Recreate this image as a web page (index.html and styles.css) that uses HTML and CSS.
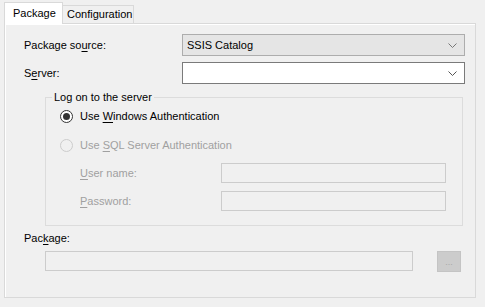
FILE: index.html
```html
<!DOCTYPE html>
<html>
<head>
    <meta charset="utf-8">
    <title>Package</title>
    <link rel="stylesheet" href="styles.css">
</head>
<body>
    <div class="tabs">
        <div class="tab active">Package</div>
        <div class="tab">Configuration</div>
    </div>
    <div class="panel">
        <div class="row">
            <label class="label">Package so<u>u</u>rce:</label>
            <div class="combo readonly">SSIS Catalog<svg class="arrow" width="9" height="5" viewBox="0 0 9 5"><path d="M0.5 0.5 L4.5 4.5 L8.5 0.5" fill="none" stroke="#777" stroke-width="1"/></svg></div>
        </div>
        <div class="row second">
            <label class="label">S<u>e</u>rver:</label>
            <div class="combo edit"><svg class="arrow" width="9" height="5" viewBox="0 0 9 5"><path d="M0.5 0.5 L4.5 4.5 L8.5 0.5" fill="none" stroke="#555" stroke-width="1"/></svg></div>
        </div>

        <fieldset class="group">
            <legend>Log on to the server</legend>
            <div class="radio-row">
                <span class="radio checked"></span>
                <span>Use <u>W</u>indows Authentication</span>
            </div>
            <div class="radio-row disabled sql">
                <span class="radio"></span>
                <span>Use <u>S</u>QL Server Authentication</span>
            </div>
            <div class="cred first">
                <span class="cred-label"><u>U</u>ser name:</span>
                <div class="textbox"></div>
            </div>
            <div class="cred">
                <span class="cred-label"><u>P</u>assword:</span>
                <div class="textbox"></div>
            </div>
        </fieldset>

        <div class="label pkg-label">Pac<u>k</u>age:</div>
        <div class="pkg-row">
            <div class="pkg-box"></div>
            <div class="browse">...</div>
        </div>
    </div>
</body>
</html>
```

FILE: styles.css
```css
* {
    margin: 0;
    padding: 0;
    box-sizing: border-box;
}
body {
    background: #f0f0f0;
    font-family: "Liberation Sans", Arial, sans-serif;
    font-size: 11px;
    color: #000;
    width: 485px;
    height: 307px;
    overflow: hidden;
}
u {
    text-decoration-thickness: 1px;
    text-underline-offset: 2px;
}
.tabs {
    display: flex;
    align-items: flex-end;
    padding-left: 4px;
    height: 24px;
    position: relative;
    z-index: 1;
}
.tab {
    border: 1px solid #d9d9d9;
    border-bottom: none;
    background: #f0f0f0;
    height: 18px;
    line-height: 17px;
    padding: 0 4px;
    margin-bottom: 1px;
}
.tab.active {
    background: #fff;
    height: 22px;
    line-height: 20px;
    padding: 0 8px;
    margin-bottom: 0;
    width: 59px;
}
.tab + .tab {
    border-left: none;
    width: 71px;
}
.panel {
    margin: -1px 9px 0 4px;
    height: 275px;
    border: 1px solid #d9d9d9;
    padding: 10px 9px 0 19px;
    box-shadow: inset 1px 1px 0 #fff;
}
.row {
    display: grid;
    grid-template-columns: 158px 283px;
    align-items: center;
    height: 22px;
}
.row.second {
    margin-top: 6px;
}
.combo {
    height: 22px;
    display: flex;
    align-items: center;
    justify-content: space-between;
    padding: 0 7px 0 4px;
    line-height: 20px;
}
.combo.readonly {
    background: #e5e5e5;
    border: 1px solid #adadad;
}
.combo.edit {
    background: #fff;
    border: 1px solid #7a7a7a;
    justify-content: flex-end;
}
.group {
    margin: 5px 0 0 21px;
    width: 417px;
    border: 1px solid #dcdcdc;
    padding: 0 16px 14px 14px;
}
.group legend {
    margin-left: -8px;
    padding: 0 2px;
    line-height: 16px;
}
.radio-row {
    display: flex;
    align-items: center;
    gap: 7px;
    height: 16px;
    margin-top: 3px;
}
.radio-row.sql {
    margin-top: 13px;
}
.radio {
    width: 13px;
    height: 13px;
    border-radius: 50%;
    border: 1px solid #333;
    background: #fff;
    display: flex;
    align-items: center;
    justify-content: center;
}
.radio.checked::after {
    content: "";
    width: 7px;
    height: 7px;
    border-radius: 50%;
    background: #333;
}
.disabled {
    color: #a0a0a0;
}
.disabled .radio {
    border-color: #cccccc;
    background: #f0f0f0;
}
.cred {
    display: flex;
    align-items: center;
    padding-left: 20px;
    margin-top: 8px;
    color: #a0a0a0;
}
.cred.first {
    margin-top: 10px;
}
.cred-label {
    width: 141px;
}
.textbox {
    width: 225px;
    height: 20px;
    border: 1px solid #cccccc;
    background: #f0f0f0;
}
.pkg-label {
    margin-top: 4px;
    line-height: 16px;
}
.pkg-row {
    display: flex;
    align-items: flex-start;
    margin: 5px 0 0 21px;
}
.pkg-box {
    width: 368px;
    height: 20px;
    border: 1px solid #cccccc;
    background: #f0f0f0;
}
.browse {
    margin-left: 24px;
    width: 24px;
    height: 21px;
    background: #cccccc;
    border: 1px solid #c4c4c4;
    color: #a8a8a8;
    font-size: 9px;
    text-align: center;
    line-height: 20px;
}
```
